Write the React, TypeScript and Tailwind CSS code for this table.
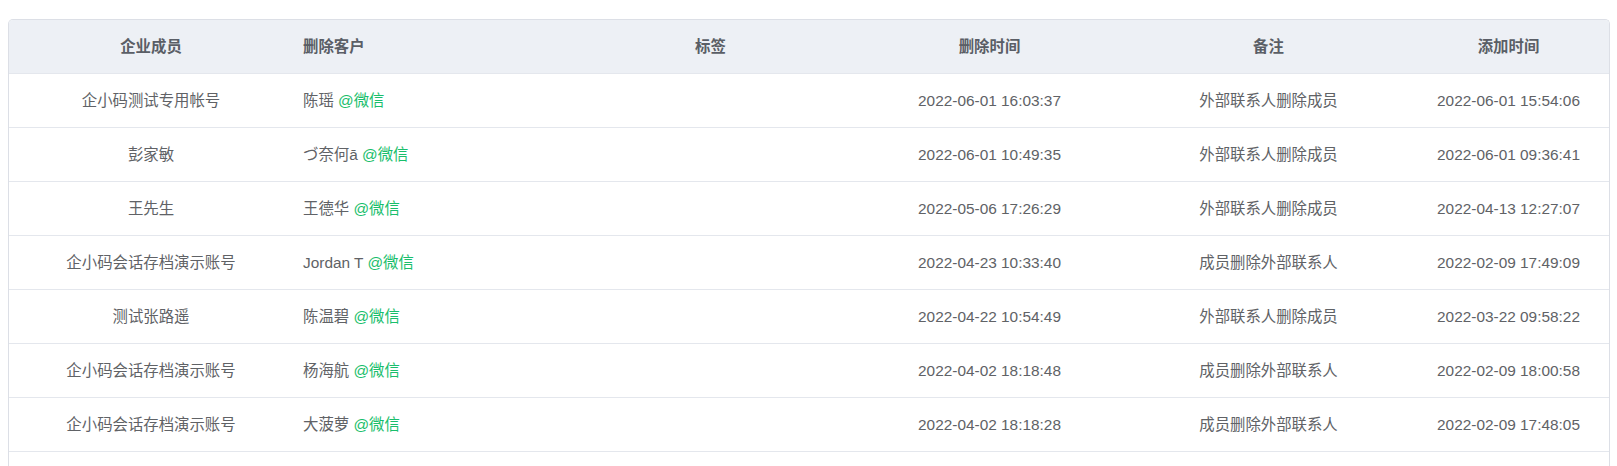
import React from 'react';

const rows = [
  { member: '企小码测试专用帐号', customer: '陈瑶', delTime: '2022-06-01 16:03:37', note: '外部联系人删除成员', addTime: '2022-06-01 15:54:06' },
  { member: '彭家敏', customer: 'づ奈何ā', delTime: '2022-06-01 10:49:35', note: '外部联系人删除成员', addTime: '2022-06-01 09:36:41' },
  { member: '王先生', customer: '王德华', delTime: '2022-05-06 17:26:29', note: '外部联系人删除成员', addTime: '2022-04-13 12:27:07' },
  { member: '企小码会话存档演示账号', customer: 'Jordan T', delTime: '2022-04-23 10:33:40', note: '成员删除外部联系人', addTime: '2022-02-09 17:49:09' },
  { member: '测试张路遥', customer: '陈温碧', delTime: '2022-04-22 10:54:49', note: '外部联系人删除成员', addTime: '2022-03-22 09:58:22' },
  { member: '企小码会话存档演示账号', customer: '杨海航', delTime: '2022-04-02 18:18:48', note: '成员删除外部联系人', addTime: '2022-02-09 18:00:58' },
  { member: '企小码会话存档演示账号', customer: '大菠萝', delTime: '2022-04-02 18:18:28', note: '成员删除外部联系人', addTime: '2022-02-09 17:48:05' },
];

const cols = 'grid grid-cols-[284px_278px_279px_279px_279px_1fr]';

export default function App() {
  return (
    <div className="min-h-screen bg-white pt-[19px] pl-2 pr-[7px] font-['Liberation_Sans','Noto_Sans_CJK_SC',sans-serif] text-[15.4px] text-[#606266]">
      <div className="min-h-[460px] rounded-t-[5px] border border-b-0 border-[#dcdfe6] overflow-hidden">
        {/* Header */}
        <div className={`${cols} h-[54px] items-center border-b border-[#e4e7ed] bg-[#edf0f5] font-bold text-[#5a5e66]`}>
          <div className="text-center">企业成员</div>
          <div className="pl-[10px]">删除客户</div>
          <div className="text-center">标签</div>
          <div className="text-center">删除时间</div>
          <div className="text-center">备注</div>
          <div className="text-center">添加时间</div>
        </div>

        {rows.map((r, i) => (
          <div key={i} className={`${cols} h-[54px] items-center border-b border-[#e4e7ed]`}>
            <div className="text-center">{r.member}</div>
            <div className="pl-[10px]">
              {r.customer} <span className="text-[#19be6b]">@微信</span>
            </div>
            <div className="text-center"></div>
            <div className="text-center">{r.delTime}</div>
            <div className="text-center">{r.note}</div>
            <div className="text-center">{r.addTime}</div>
          </div>
        ))}
      </div>
    </div>
  );
}
